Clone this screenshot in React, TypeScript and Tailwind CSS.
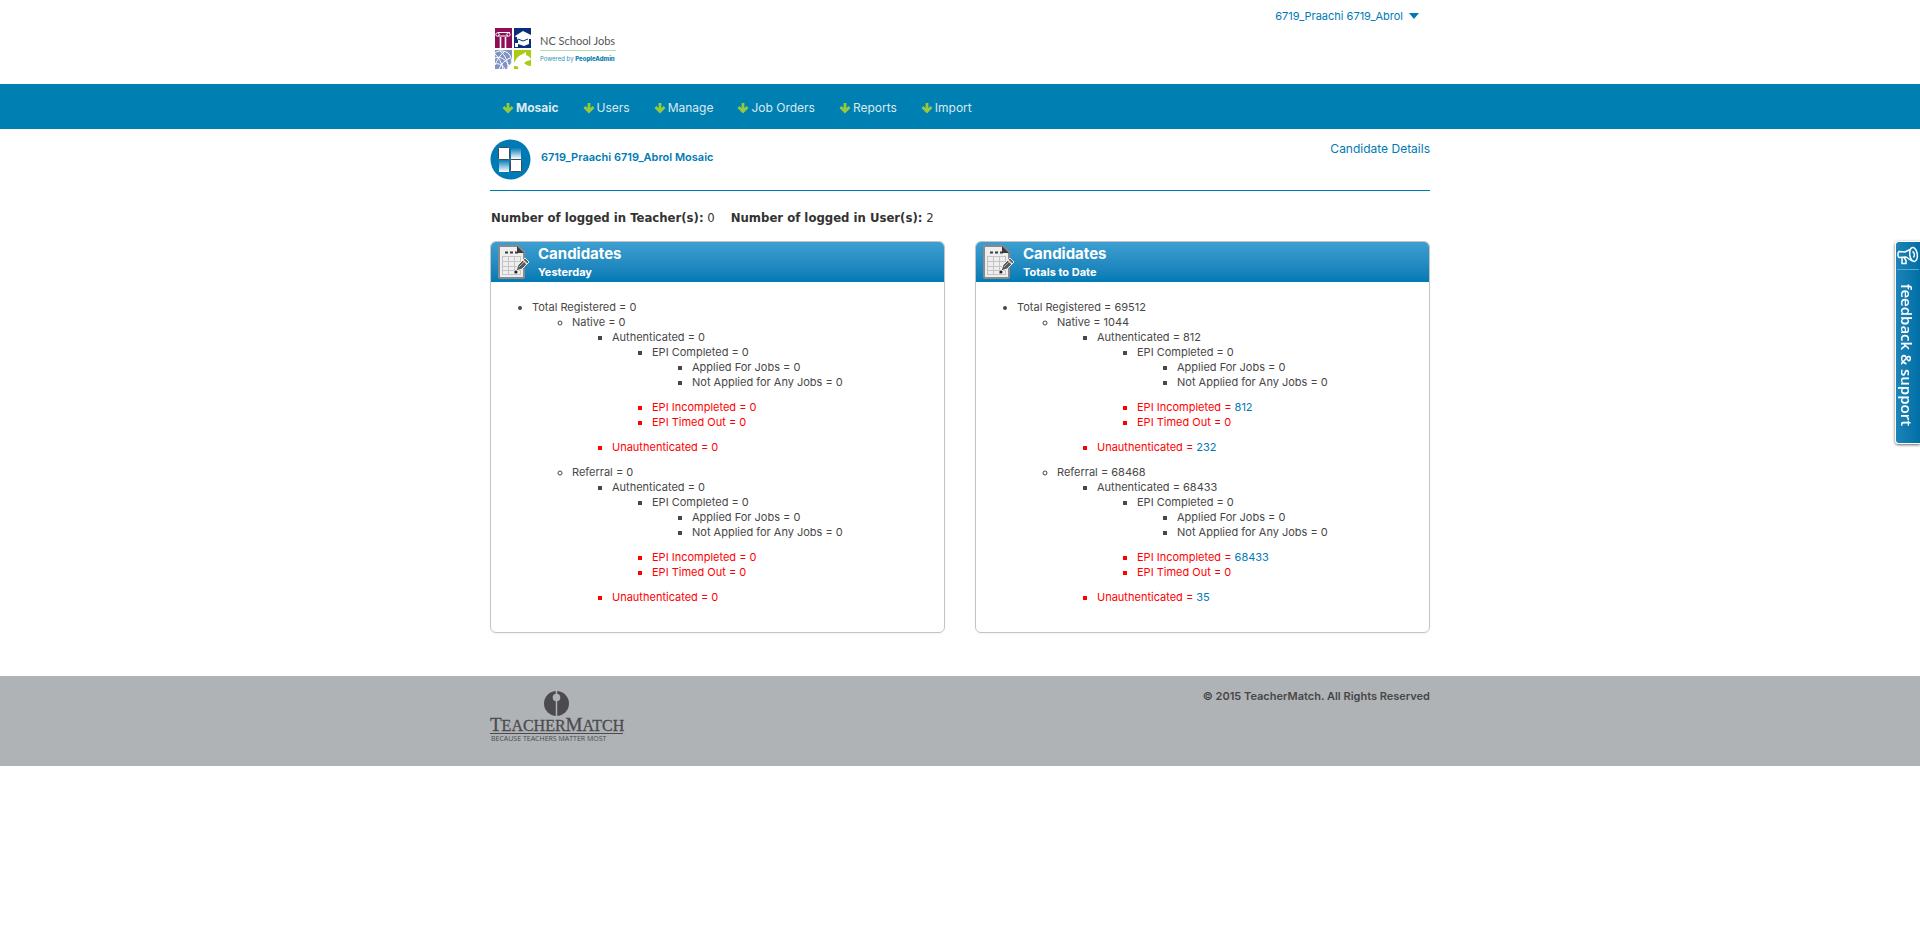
import React from "react";

type Count = { value: number; link?: boolean };

type Branch = {
  name: string;
  total: number;
  authenticated: number;
  incompleted: Count;
  unauthenticated: Count;
};

type Summary = {
  period: string;
  registered: number;
  branches: Branch[];
};

const summaries: Summary[] = [
  {
    period: "Yesterday",
    registered: 0,
    branches: [
      { name: "Native", total: 0, authenticated: 0, incompleted: { value: 0 }, unauthenticated: { value: 0 } },
      { name: "Referral", total: 0, authenticated: 0, incompleted: { value: 0 }, unauthenticated: { value: 0 } },
    ],
  },
  {
    period: "Totals to Date",
    registered: 69512,
    branches: [
      {
        name: "Native",
        total: 1044,
        authenticated: 812,
        incompleted: { value: 812, link: true },
        unauthenticated: { value: 232, link: true },
      },
      {
        name: "Referral",
        total: 68468,
        authenticated: 68433,
        incompleted: { value: 68433, link: true },
        unauthenticated: { value: 35, link: true },
      },
    ],
  },
];

const navItems = ["Mosaic", "Users", "Manage", "Job Orders", "Reports", "Import"];

function SchoolLogo() {
  return (
    <svg width="140" height="44" viewBox="0 0 140 44" role="img" aria-label="NC School Jobs">
      <rect x="5" y="1" width="17" height="20" fill="#8d0e57" />
      <rect x="24" y="1" width="17" height="20" fill="#0b2d7c" />
      <rect x="5" y="23" width="17" height="19" fill="#8093c4" />
      <rect x="24" y="23" width="17" height="19" fill="#aacb13" />
      <g fill="none" stroke="#fff">
        <path d="M8 5.500h12M8 9h10" strokeWidth="1.200" />
        <circle cx="7.500" cy="7.500" r="1.700" />
        <circle cx="18.500" cy="7.500" r="1.700" />
        <path d="M10.500 10v11M15.500 10v11" strokeWidth="1.600" />
      </g>
      <path d="M25 9l8-5 8 4v4l-2 0v5l-5 2-6-2v-4z" fill="#fff" />
      <path d="M28 12l5 2 5-2M26.500 10v8" stroke="#0b2d7c" strokeWidth="1" fill="none" />
      <path d="M25 16l3 0v4h-3z" fill="#fff" />
      <g fill="none" stroke="#fff" strokeWidth="1">
        <path d="M5 26c3-3 10-3 14 1 3 4 3 9 1 15M5 31c5-2 11 1 14 8M5 37c4-1 8 1 10 5M10 24c5 4 8 10 8 17M5 27c4 4 7 9 8 15M14 25c-4 3-7 8-9 13M20 31c-5 2-9 6-11 11" />
      </g>
      <path d="M17 42c1-3 3-5 5-6v6z" fill="#fff" />
      <path d="M24 36c2-5 5-8 9-9l3-2 0 3c3 1 5 3 5 5l-4 1-3 2c2 2 4 3 7 3v3H28c1-2 0-3-4-3z" fill="#fff" />
      <text x="50" y="18" fontFamily="Lato, sans-serif" fontSize="11" fill="#555">
        NC School Jobs
      </text>
      <path d="M50 23.500h76" stroke="#b9dfb0" />
      <text x="50" y="34" fontFamily="Inter, sans-serif" fontSize="6" fill="#2a93bd">
        Powered by{" "}
        <tspan fontWeight="800" fill="#0a7fb2">
          PeopleAdmin
        </tspan>
      </text>
    </svg>
  );
}

function NavArrow() {
  return (
    <svg width="12" height="12" viewBox="0 0 12 12" aria-hidden="true">
      <path d="M6 1v8M1.500 5L6 9.500 10.500 5" fill="none" stroke="#96c93d" strokeWidth="2.800" />
    </svg>
  );
}

function MosaicIcon() {
  return (
    <svg width="41" height="41" viewBox="0 0 41 41" aria-hidden="true">
      <defs>
        <linearGradient id="tile" x1="0" y1="0" x2="0" y2="1">
          <stop offset="0" stopColor="#0a7bb5" />
          <stop offset="1" stopColor="#fff" />
        </linearGradient>
      </defs>
      <circle cx="20.500" cy="20.500" r="20" fill="#007ab4" />
      <rect x="21" y="9" width="10" height="11" fill="url(#tile)" />
      <rect x="9" y="21" width="10" height="12" fill="url(#tile)" />
      <rect x="8.500" y="8.500" width="11" height="12" rx="1" fill="#fff" stroke="#3d4a52" />
      <rect x="20.500" y="20.500" width="11" height="12" rx="1" fill="#fff" stroke="#3d4a52" />
    </svg>
  );
}

function ReportIcon() {
  return (
    <svg width="34" height="36" viewBox="0 0 34 36" aria-hidden="true">
      <path d="M4 2h18l6 6v25a1 1 0 0 1-1 1H4a1 1 0 0 1-1-1V3a1 1 0 0 1 1-1z" fill="#eee" stroke="#8a8a8a" strokeWidth="2" />
      <path d="M21 2l7 7h-7z" fill="#3b3b3b" />
      <path d="M9 8.500h13" stroke="#3b3b3b" strokeWidth="2" strokeDasharray="3 2" />
      <path d="M6 12.500h19M6 17.500h19M6 22.500h19M6 26.500h19M6 30.500h19M6.500 12v19M12.500 12v19M18.500 12v19M24.500 12v19" stroke="#c4c4c4" />
      <path d="M20 27l2-6 7-7 4 4-7 7z" fill="#5a5a5a" stroke="#ededed" />
      <path d="M27 16l4 4" stroke="#e5e5e5" strokeWidth="1.500" />
      <path d="M23 23l5-5" stroke="#aaa" />
      <circle cx="20" cy="28" r="1.500" fill="#222" />
    </svg>
  );
}

function FooterLogo() {
  return (
    <svg width="140" height="54" viewBox="0 0 140 54" role="img" aria-label="TeacherMatch">
      <circle cx="66.500" cy="15.500" r="12.500" fill="#4b4b4d" />
      <circle cx="66.500" cy="9.500" r="3.800" fill="#afb3b6" />
      <path d="M66.500 2v27" stroke="#afb3b6" strokeWidth="1.500" />
      <text x="0" y="43" fontFamily="'Liberation Serif', serif" fontSize="19" fill="#4b4b4d" stroke="#4b4b4d" strokeWidth="0.300">
        T
        <tspan fontSize="16">EACHER</tspan>M<tspan fontSize="16">ATCH</tspan>
      </text>
      <path d="M0 45.500h133" stroke="#4b4b4d" />
      <text x="1" y="53" fontFamily="'Open Sans', sans-serif" fontSize="7" fill="#4b4b4d">
        BECAUSE TEACHERS MATTER MOST
      </text>
    </svg>
  );
}

function Megaphone() {
  return (
    <svg width="22" height="20" viewBox="0 0 22 20" fill="none" stroke="#fff" strokeWidth="1.500" aria-hidden="true">
      <path d="M14 3L8 6 2 5.500C.500 7 .500 10 2 11.500l7-.500 6 4" />
      <ellipse cx="16.500" cy="8.500" rx="3.800" ry="7" transform="rotate(-8 16.500 8.500)" />
      <path d="M15.500 5.500c2 1 2.500 4 1 6M5 12v5.500h4v-3l-2-3" />
    </svg>
  );
}

function CountValue({ count }: { count: Count }) {
  if (!count.link) return <>{count.value}</>;
  return (
    <a href="#" className="text-[#007ab4]">
      {count.value}
    </a>
  );
}

function SummaryCard({ summary }: { summary: Summary }) {
  return (
    <section className="flex-1 overflow-hidden rounded-md border border-[#c4c4c4] shadow-xs">
      <header className="flex h-10 items-center gap-2 bg-linear-to-b from-[#3d9fd1] to-[#007ab4] pl-[5px] text-white">
        <ReportIcon />
        <div className="font-bold">
          <h2 className="text-[15px] leading-5">Candidates</h2>
          <p className="text-[11px] leading-4">{summary.period}</p>
        </div>
      </header>
      <ul className="list-disc pt-[18px] pr-2 pb-[17px] pl-[41px] text-[11px] leading-[15px] text-[#474747]">
        <li>
          Total Registered = {summary.registered}
          <ul className="list-[circle] pl-10">
            {summary.branches.map((branch) => (
              <li key={branch.name}>
                {branch.name} = {branch.total}
                <ul className="mb-[10px] list-[square] pl-10">
                  <li>
                    Authenticated = {branch.authenticated}
                    <ul className="mb-[10px] list-[square] pl-10">
                      <li>
                        EPI Completed = 0
                        <ul className="mb-[10px] list-[square] pl-10">
                          <li>Applied For Jobs = 0</li>
                          <li>Not Applied for Any Jobs = 0</li>
                        </ul>
                      </li>
                      <li className="text-[#ff0000]">
                        EPI Incompleted = <CountValue count={branch.incompleted} />
                      </li>
                      <li className="text-[#ff0000]">EPI Timed Out = 0</li>
                    </ul>
                  </li>
                  <li className="text-[#ff0000]">
                    Unauthenticated = <CountValue count={branch.unauthenticated} />
                  </li>
                </ul>
              </li>
            ))}
          </ul>
        </li>
      </ul>
    </section>
  );
}

export default function App() {
  return (
    <div className="bg-white font-[Inter,sans-serif] text-xs text-[#474747]">
      <header className="mx-auto flex h-[84px] max-w-[940px] items-start justify-between">
        <a href="#" className="pt-[27px]">
          <SchoolLogo />
        </a>
        <button type="button" className="flex items-center gap-[6px] pt-2 pr-[11px] text-[11px] leading-4 text-[#007ab4]">
          6719_Praachi 6719_Abrol
          <svg width="10" height="6" viewBox="0 0 10 6" aria-hidden="true">
            <path d="M0 0h10L5 6z" fill="#007ab4" />
          </svg>
        </button>
      </header>

      <nav className="bg-[#007fb2]">
        <ul className="mx-auto flex h-[45px] max-w-[940px] items-center gap-6 pt-[2px] pl-3 text-[#dce9f0]">
          {navItems.map((item, index) => (
            <li key={item}>
              <a href="#" className={index === 0 ? "flex items-center gap-[2px] font-bold" : "flex items-center gap-[2px]"}>
                <NavArrow />
                {item}
              </a>
            </li>
          ))}
        </ul>
      </nav>

      <main className="mx-auto max-w-[940px]">
        <div className="flex h-[62px] items-start justify-between border-b border-[#007ab4] pt-[10px] text-[#007ab4]">
          <div className="flex items-center gap-[10px]">
            <MosaicIcon />
            <h1 className="pb-[6px] text-[11px] leading-4 font-semibold">6719_Praachi 6719_Abrol Mosaic</h1>
          </div>
          <a href="#" className="pt-[2px] text-xs leading-4">
            Candidate Details
          </a>
        </div>

        <p className="flex gap-4 pt-[17px] pb-[13px] pl-px font-['DejaVu_Sans_Condensed','DejaVu_Sans',sans-serif] text-[13px] leading-5 text-[#333]">
          <span>
            <strong>Number of logged in Teacher(s):</strong> 0
          </span>
          <span>
            <strong>Number of logged in User(s):</strong> 2
          </span>
        </p>

        <div className="flex gap-[30px]">
          {summaries.map((summary) => (
            <SummaryCard key={summary.period} summary={summary} />
          ))}
        </div>
      </main>

      <footer className="mt-[43px] bg-[#afb3b6]">
        <div className="mx-auto flex h-[90px] max-w-[940px] items-start justify-between pt-3">
          <FooterLogo />
          <p className="text-[11px] leading-4 font-semibold">© 2015 TeacherMatch. All Rights Reserved</p>
        </div>
      </footer>

      <button
        type="button"
        className="fixed top-[241px] right-0 flex h-[203px] w-[25px] flex-col items-center rounded-l-sm border-y border-l border-white bg-linear-to-r from-[#1b84b8] to-[#006fa6] text-white shadow-[0_1px_3px_rgba(0,0,0,0.6)]"
      >
        <span className="flex h-7 items-center border-b border-[#5aa9cf]">
          <Megaphone />
        </span>
        <span className="pt-[14px] pr-[2px] font-['Open_Sans',sans-serif] text-[15px] leading-5 font-semibold [writing-mode:vertical-rl]">
          feedback &amp; support
        </span>
      </button>
    </div>
  );
}
